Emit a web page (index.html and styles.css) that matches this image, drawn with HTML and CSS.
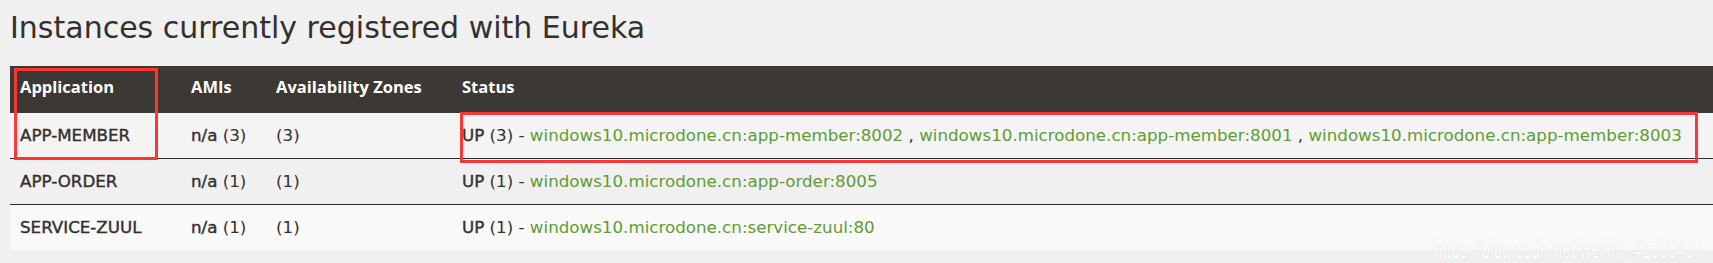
FILE: index.html
```html
<!DOCTYPE html>
<html lang="en">
<head>
<meta charset="utf-8">
<title>Eureka</title>
<link rel="stylesheet" href="styles.css">
</head>
<body>
<div class="page">
  <h1 class="title">Instances currently registered with Eureka</h1>
  <table class="instances">
    <colgroup>
      <col class="col-app">
      <col class="col-ami">
      <col class="col-zone">
      <col class="col-status">
    </colgroup>
    <thead>
      <tr>
        <th>Application</th>
        <th>AMIs</th>
        <th>Availability Zones</th>
        <th>Status</th>
      </tr>
    </thead>
    <tbody>
      <tr class="row-a">
        <td><b>APP-MEMBER</b></td>
        <td><b>n/a</b> (3)</td>
        <td>(3)</td>
        <td><b>UP</b> (3) - <a href="#">windows10.microdone.cn:app-member:8002</a> , <a href="#">windows10.microdone.cn:app-member:8001</a> , <a href="#">windows10.microdone.cn:app-member:8003</a></td>
      </tr>
      <tr class="row-b">
        <td><b>APP-ORDER</b></td>
        <td><b>n/a</b> (1)</td>
        <td>(1)</td>
        <td><b>UP</b> (1) - <a href="#">windows10.microdone.cn:app-order:8005</a></td>
      </tr>
      <tr class="row-c">
        <td><b>SERVICE-ZUUL</b></td>
        <td><b>n/a</b> (1)</td>
        <td>(1)</td>
        <td><b>UP</b> (1) - <a href="#">windows10.microdone.cn:service-zuul:80</a></td>
      </tr>
    </tbody>
  </table>
  <div class="mark mark-app"></div>
  <div class="mark mark-status"></div>
  <div class="watermark">https://blog.csdn.net/weixin_41300437</div>
</div>
</body>
</html>
```
FILE: styles.css
```css
html, body {
  margin: 0;
  padding: 0;
  background: #f0f0f0;
}

.page {
  position: relative;
  height: 263px;
  padding-left: 10px;
  overflow: hidden;
  font-family: "DejaVu Sans", sans-serif;
  color: #34302d;
}

.title {
  margin: 0;
  padding-top: 10px;
  height: 66px;
  box-sizing: border-box;
  font-family: "DejaVu Sans", sans-serif;
  font-weight: normal;
  font-size: 30px;
  line-height: 36px;
  color: #34302d;
}

.instances {
  width: 100%;
  border-collapse: collapse;
  table-layout: fixed;
}

.col-app { width: 171px; }
.col-ami { width: 85px; }
.col-zone { width: 186px; }

.instances th {
  background: #3c3833;
  color: #ffffff;
  font-family: "Open Sans", sans-serif;
  font-weight: 700;
  font-size: 16.5px;
  line-height: 24px;
  text-align: left;
  padding: 9px 10px 13px;
  white-space: nowrap;
}

.instances td {
  font-size: 16.7px;
  line-height: 20px;
  padding: 12px 10px 13px;
  white-space: nowrap;
  border-top: 1px solid #2f2c29;
}

.instances .row-a td {
  border-top-color: #3c3833;
}

.instances b {
  font-weight: normal;
  -webkit-text-stroke: 0.4px #34302d;
}

.row-a { background: #f4f4f4; }
.row-b { background: #f0f0f0; }
.row-c { background: #f9f9f9; }

.instances a {
  color: #5f9c33;
  text-decoration: none;
}

.mark {
  position: absolute;
  border: 3px solid #ff3636;
  box-sizing: border-box;
}

.mark-app {
  left: 14px;
  top: 68px;
  width: 144px;
  height: 92px;
}

.mark-status {
  left: 460px;
  top: 112px;
  width: 1238px;
  height: 51px;
}

.watermark {
  position: absolute;
  right: 10px;
  top: 234px;
  font-family: "Liberation Sans", sans-serif;
  font-size: 28px;
  line-height: 30px;
  color: rgba(255, 255, 255, 0.95);
  text-shadow: 0 0 1px rgba(0, 0, 0, 0.15);
  transform: scaleX(0.567);
  transform-origin: right center;
  white-space: nowrap;
}
```
